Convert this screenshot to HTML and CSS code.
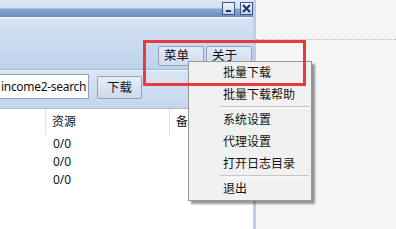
FILE: index.html
```html
<!DOCTYPE html>
<html lang="zh-CN">
<head>
<meta charset="utf-8">
<title>批量下载</title>
<link rel="stylesheet" href="styles.css">
</head>
<body>
<div class="screen">
  <div class="window">
    <div class="titlebar">
      <span class="tb-btn"><svg width="11" height="11" viewBox="0 0 11 11"><rect x="3" y="7" width="5" height="2" fill="#1c3563"/></svg></span>
      <span class="tb-btn"><svg width="11" height="11" viewBox="0 0 11 11"><path d="M2 2 L9 9 M9 2 L2 9" stroke="#1c3563" stroke-width="2"/></svg></span>
    </div>
    <div class="toolbar">
      <span class="tool-btn">菜单</span>
      <span class="tool-btn">关于</span>
    </div>
    <div class="searchbar">
      <div class="field"><span>income2-search</span></div>
      <span class="dl-btn">下载</span>
    </div>
    <div class="table">
      <div class="thead">
        <span class="cell"></span>
        <span class="cell sep">资源</span>
        <span class="cell sep">备注</span>
      </div>
      <div class="trow"><span class="cell"></span><span class="cell">0/0</span><span class="cell"></span></div>
      <div class="trow"><span class="cell"></span><span class="cell">0/0</span><span class="cell"></span></div>
      <div class="trow"><span class="cell"></span><span class="cell">0/0</span><span class="cell"></span></div>
    </div>
  </div>
  <div class="side"></div>

  <div class="menu">
    <div class="item">批量下载</div>
    <div class="item">批量下载帮助</div>
    <div class="msep"></div>
    <div class="item">系统设置</div>
    <div class="item">代理设置</div>
    <div class="item">打开日志目录</div>
    <div class="msep"></div>
    <div class="item">退出</div>
  </div>
  <div class="mark"></div>
</div>
</body>
</html>
```
FILE: styles.css
```css
* { box-sizing: border-box; }
html, body { margin: 0; padding: 0; }
body {
  font-family: "Noto Sans", "Noto Sans CJK SC", sans-serif;
  font-size: 12px;
  color: #111;
  background: #f6f6f6;
}
.screen {
  position: relative;
  width: 396px;
  height: 229px;
  overflow: hidden;
  display: flex;
}
.window {
  width: 256px;
  height: 229px;
  display: flex;
  flex-direction: column;
  border-right: 3px solid #bccde8;
}
.titlebar {
  height: 17px;
  display: flex;
  justify-content: flex-end;
  align-items: flex-start;
  gap: 5px;
  padding: 2px 0 0 0;
  background: linear-gradient(#e0e8f3 0, #d3deef 8px, #87a5d1 9px, #6b8ec3 17px);
}
.tb-btn {
  width: 13px;
  height: 13px;
  border: 1px solid #3b5a8a;
  background: linear-gradient(#f1f5fb, #c3d3ea);
  display: flex;
  align-items: center;
  justify-content: center;
}
.toolbar {
  height: 53px;
  border-top: 2px solid #eaf0f8;
  border-bottom: 1px solid #9fb6d8;
  background: linear-gradient(#d5e2f3, #bed2ec);
  display: flex;
  justify-content: flex-end;
  align-items: flex-start;
  gap: 2px;
  padding: 27px 1px 0 0;
}
.tool-btn {
  height: 20px;
  line-height: 18px;
  border: 1px solid #8fa3c1;
  border-radius: 2px;
  background: linear-gradient(#e3ebf6, #d0ddef);
  padding: 0 14px 0 5px;
  font-size: 12.5px;
}
.searchbar {
  height: 39px;
  border-top: 1px solid #f2f6fb;
  border-bottom: 1px solid #a9b9ce;
  background: linear-gradient(#d9e5f4, #c3d6ee);
  display: flex;
  align-items: flex-start;
  gap: 8px;
  padding-top: 3px;
}
.field {
  width: 90px;
  margin-left: -1px;
  height: 25px;
  border: 1px solid #8ea3bf;
  background: #fff;
  display: flex;
  justify-content: flex-start;
  align-items: center;
  overflow: hidden;
  padding-left: 1px;
  white-space: nowrap;
  font-size: 12px;
  letter-spacing: -0.3px;
}
.dl-btn {
  width: 45px;
  height: 23px;
  margin-top: 2px;
  line-height: 21px;
  text-align: center;
  border: 1px solid #8ea3c0;
  border-radius: 2px;
  background: linear-gradient(#e6edf7, #ccdaed);
  font-size: 12.5px;
}
.table {
  flex: 1;
  background: #fff;
}
.thead, .trow {
  display: grid;
  grid-template-columns: 45px 124px 1fr;
}
.thead { height: 26px; }
.thead .cell {
  line-height: 26px;
  padding-left: 6px;
}
.thead .sep { border-left: 1px solid #e2e2e2; }
.trow { height: 18px; }
.trow .cell {
  line-height: 18px;
  padding-left: 8px;
}
.side {
  flex: 1;
  margin-top: 39px;
  border-top: 1px dotted #b3b3b3;
}
.menu {
  position: absolute;
  left: 188px;
  top: 61px;
  width: 124px;
  border: 1px solid #979797;
  background: #f1f1f1;
  box-shadow: 3px 3px 2px rgba(0, 0, 0, 0.4);
  padding: 0;
}
.item {
  height: 22px;
  line-height: 22px;
  padding-left: 34px;
  white-space: nowrap;
}
.msep {
  height: 3px;
  margin: 0 2px 0 31px;
  border-top: 1px solid #c6c6c6;
  border-bottom: 1px solid #fff;
}
.mark {
  position: absolute;
  left: 143px;
  top: 40px;
  width: 163px;
  height: 46px;
  border: 3px solid #e8393f;
}
```
